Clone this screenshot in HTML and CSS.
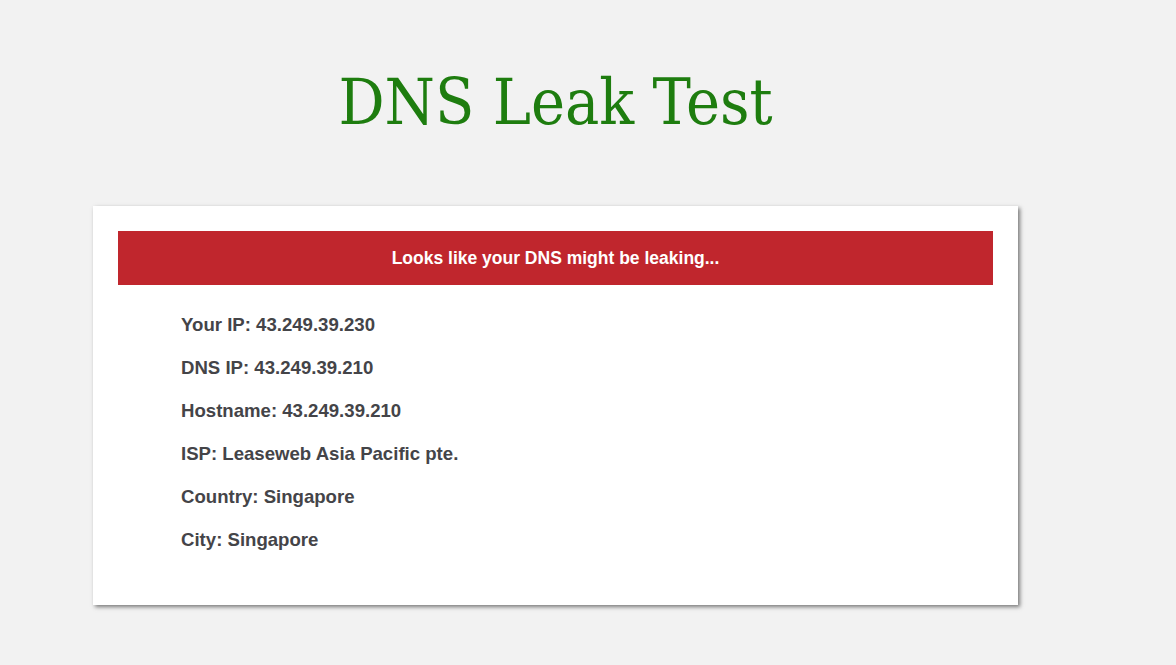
FILE: index.html
```html
<!DOCTYPE html>
<html lang="en">
<head>
<meta charset="utf-8">
<title>DNS Leak Test</title>
<link rel="stylesheet" href="styles.css">
</head>
<body>
<main class="page">
  <h1 class="title">DNS Leak Test</h1>
  <section class="card">
    <div class="alert">Looks like your DNS might be leaking...</div>
    <ul class="info">
      <li>Your IP: 43.249.39.230</li>
      <li>DNS IP: 43.249.39.210</li>
      <li>Hostname: 43.249.39.210</li>
      <li>ISP: Leaseweb Asia Pacific pte.</li>
      <li>Country: Singapore</li>
      <li>City: Singapore</li>
    </ul>
  </section>
</main>
</body>
</html>
```

FILE: styles.css
```css
html, body {
  margin: 0;
  padding: 0;
  background: #f2f2f2;
}
body {
  font-family: "Liberation Sans", Arial, sans-serif;
}
.page {
  width: 925px;
  margin-left: 93px;
  padding-top: 62px;
  padding-bottom: 60px;
}
.title {
  margin: 0;
  text-align: center;
  font-family: "DejaVu Serif Condensed", "DejaVu Serif", serif;
  font-stretch: condensed;
  font-weight: normal;
  font-size: 64px;
  line-height: 80px;
  color: #1e7d0f;
}
.card {
  margin-top: 64px;
  background: #fff;
  padding: 25px 25px 55px;
  box-shadow: 2px 2px 4px rgba(0,0,0,0.5);
}
.alert {
  background: #c0262d;
  color: #fff;
  font-weight: bold;
  font-size: 17.5px;
  height: 54px;
  display: flex;
  align-items: center;
  justify-content: center;
}
.info {
  list-style: none;
  margin: 0;
  padding: 29px 0 0 63px;
  display: flex;
  flex-direction: column;
  gap: 22px;
}
.info li {
  font-size: 18.6px;
  font-weight: bold;
  line-height: 21px;
  color: #444448;
}
```
